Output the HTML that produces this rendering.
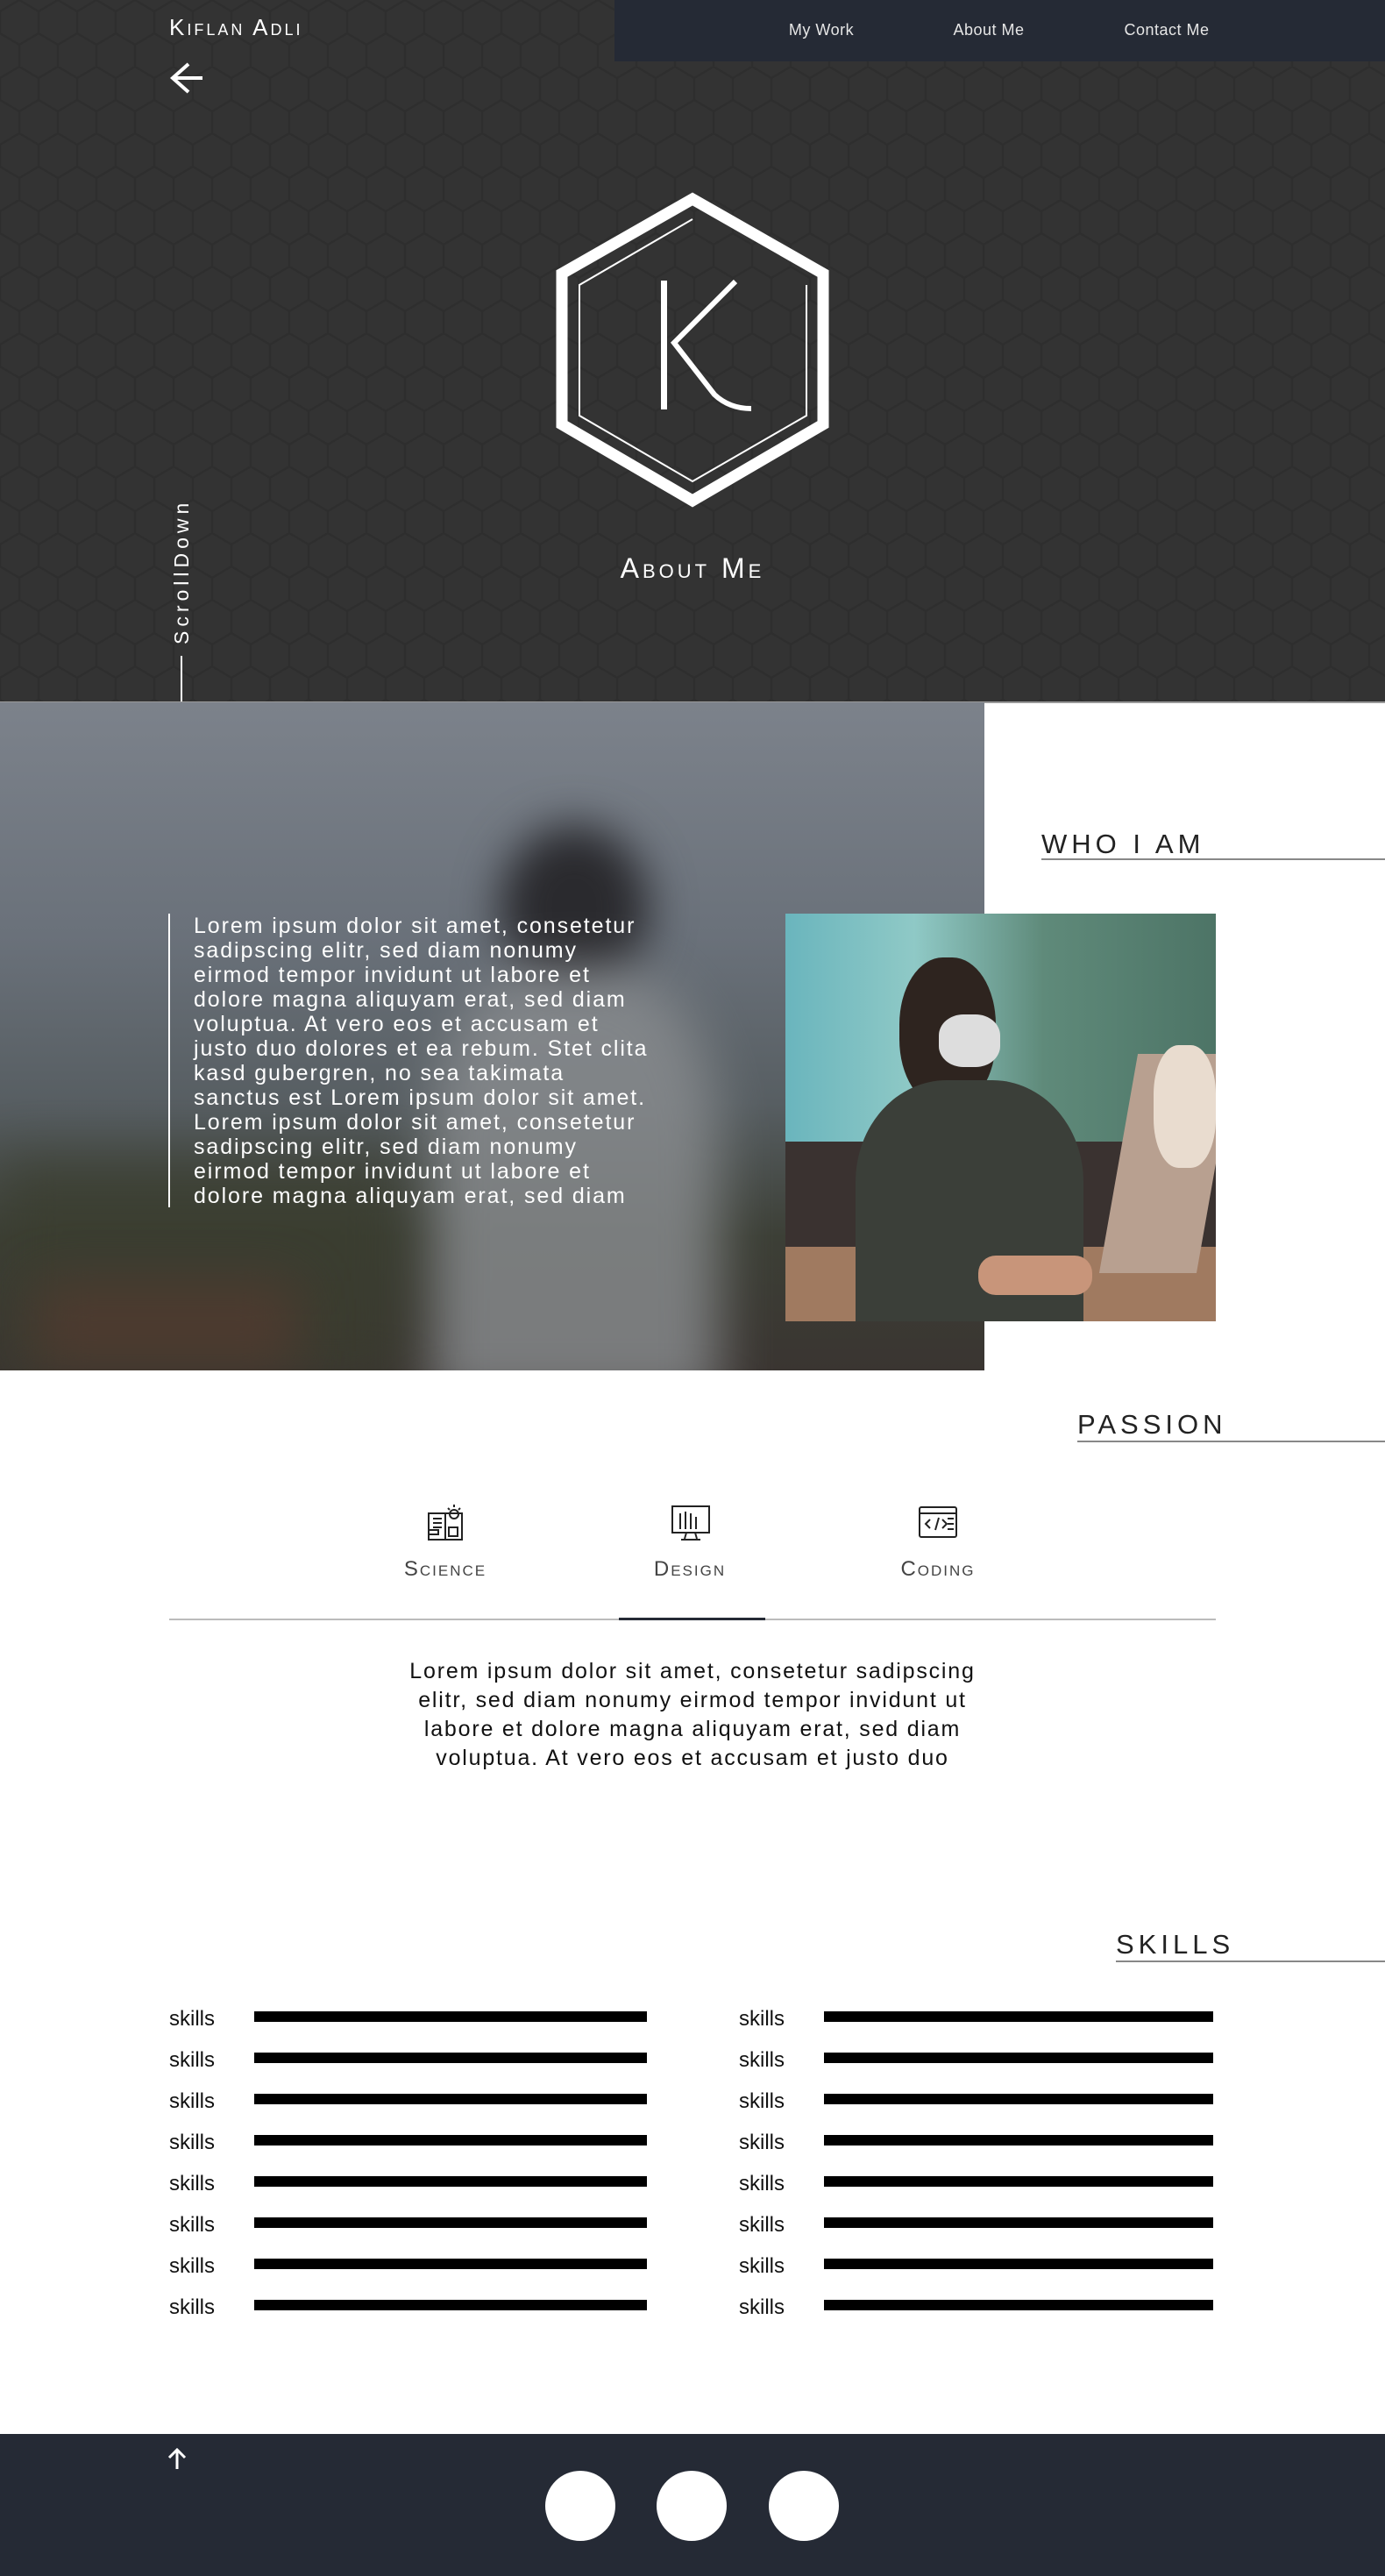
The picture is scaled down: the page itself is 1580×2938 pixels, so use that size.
<!DOCTYPE html>
<html><head><meta charset="utf-8">
<style>
*{margin:0;padding:0;box-sizing:border-box}
body{width:1580px;height:2938px;position:relative;background:#fff;font-family:"Liberation Sans",sans-serif;overflow:hidden}
.abs{position:absolute}
.hero{left:0;top:0;width:1580px;height:800px;background:#333}
.nav{left:701px;top:0;width:879px;height:70px;background:#252a35}
.nav span{position:absolute;top:24px;color:#e6e6e6;font-size:18px;transform:translateX(-50%);white-space:nowrap;letter-spacing:0.5px}
.logo{left:193px;top:16px;color:#fff;font-size:26px;letter-spacing:3px;font-variant:small-caps}
.title{color:#fff;font-size:32px;letter-spacing:4px;font-variant:small-caps;width:1580px;text-align:center;left:0;top:630px}
.head{font-size:31px;letter-spacing:5px;color:#222;font-weight:normal}
.hline{height:2px;background:#888}
.skill{font-size:24px;color:#111}
.lab{font-size:24px;color:#444;letter-spacing:2px;font-variant:small-caps;transform:translateX(-50%)}
.lt{white-space:nowrap}
</style></head><body>
<div class="abs hero">
<svg width="1580" height="800" style="position:absolute;left:0;top:0">
<defs><pattern id="hx" width="44" height="76" patternUnits="userSpaceOnUse">
<path d="M0,13 L22,0 L44,13 M0,13 L0,38 L22,51 L44,38 L44,13 M22,51 L22,76" fill="none" stroke="#2e2e2e" stroke-width="2.5"/>
</pattern></defs>
<rect width="1580" height="800" fill="url(#hx)"/>
<polygon points="790,227 939,312 939,484 790,571 641,484 641,312" fill="none" stroke="#fff" stroke-width="13"/>
<polyline points="920,325 920,474 790,549 661,474 661,325 790,250" fill="none" stroke="#fff" stroke-width="2"/>
<rect x="754" y="320" width="7" height="147" fill="#fff"/>
<path d="M839,321 L769,391 L815,450 Q832,466 857,466" fill="none" stroke="#fff" stroke-width="6"/>
<path d="M215,73 L197,89 L215,105 M197,89 L231,89" fill="none" stroke="#fff" stroke-width="4"/>
<rect x="206" y="748" width="2" height="52" fill="#fff"/>
</svg>
</div>
<div class="abs nav"><span style="left:236px">My Work</span><span style="left:427px">About Me</span><span style="left:630px">Contact Me</span></div>
<div class="abs logo">Kiflan Adli</div>
<div class="abs" style="left:194px;top:735px;transform:rotate(-90deg);transform-origin:0 0;color:#fff;font-size:23px;letter-spacing:5px;white-space:nowrap">ScrollDown</div>
<div class="abs title">About Me</div>
<div class="abs" style="left:0;top:800px;width:1580px;height:2px;background:#999"></div>

<div class="abs" style="left:0;top:801px;width:1123px;height:762px;overflow:hidden;background:linear-gradient(#7c828b 0%,#6a717a 35%,#575e62 60%,#3c3f36 80%,#3a3531 100%)">
<div class="abs" style="left:570px;top:140px;width:170px;height:190px;border-radius:50%;background:#2a2a2e;filter:blur(25px)"></div>
<div class="abs" style="left:490px;top:300px;width:330px;height:500px;border-radius:40% 40% 0 0;background:#8a8d90;filter:blur(30px);opacity:.8"></div>
<div class="abs" style="left:0;top:520px;width:460px;height:250px;background:#3a3d2e;filter:blur(30px);opacity:.7"></div>
<div class="abs" style="left:40px;top:660px;width:300px;height:100px;background:#5a3a30;filter:blur(30px);opacity:.6"></div>
</div>
<div class="abs" style="left:192px;top:1042px;width:2px;height:335px;background:#fff"></div>
<div class="abs lt" style="left:221px;top:1042px;color:#fff;font-size:25px;letter-spacing:1.9px;line-height:28px">Lorem ipsum dolor sit amet, consetetur<br>sadipscing elitr, sed diam nonumy<br>eirmod tempor invidunt ut labore et<br>dolore magna aliquyam erat, sed diam<br>voluptua. At vero eos et accusam et<br>justo duo dolores et ea rebum. Stet clita<br>kasd gubergren, no sea takimata<br>sanctus est Lorem ipsum dolor sit amet.<br>Lorem ipsum dolor sit amet, consetetur<br>sadipscing elitr, sed diam nonumy<br>eirmod tempor invidunt ut labore et<br>dolore magna aliquyam erat, sed diam</div>

<div class="abs" style="left:896px;top:1042px;width:491px;height:465px;overflow:hidden;background:linear-gradient(90deg,#6ab5bd 0%,#8fc9c6 30%,#5f8a7a 60%,#4d7466 100%)">
<div class="abs" style="left:0;top:260px;width:491px;height:205px;background:#3a3230"></div>
<div class="abs" style="left:0;top:380px;width:491px;height:90px;background:#a07a60"></div>
<div class="abs" style="left:130px;top:50px;width:110px;height:170px;border-radius:45%;background:#2e241f"></div>
<div class="abs" style="left:175px;top:115px;width:70px;height:60px;border-radius:40%;background:#ddd"></div>
<div class="abs" style="left:80px;top:190px;width:260px;height:290px;border-radius:40% 40% 0 0;background:#3b3f39"></div>
<div class="abs" style="left:220px;top:390px;width:130px;height:45px;border-radius:20px;background:#c8957a"></div>
<div class="abs" style="left:380px;top:160px;width:111px;height:250px;background:#b8a090;transform:skewX(-10deg)"></div>
<div class="abs" style="left:420px;top:150px;width:71px;height:140px;border-radius:40%;background:#e9dccf"></div>
</div>

<div class="abs head" style="left:1188px;top:945px">WHO I AM</div>
<div class="abs hline" style="left:1188px;top:979px;width:392px"></div>

<div class="abs head" style="left:1229px;top:1607px">PASSION</div>
<div class="abs hline" style="left:1229px;top:1643px;width:351px"></div>

<svg class="abs" style="left:486px;top:1715px" width="46" height="46" viewBox="0 0 46 46" fill="none" stroke="#222" stroke-width="2"><rect x="3" y="11" width="38" height="30"/><path d="M22 11v30M8 17h10M8 22h10M8 27h10M26 27h10v10H26zM4 30h10v5H4"/><circle cx="32" cy="12" r="5"/><path d="M32 1v3M25 5l2 2M39 5l-2 2"/></svg>
<svg class="abs" style="left:765px;top:1716px" width="46" height="44" viewBox="0 0 46 44" fill="none" stroke="#222" stroke-width="2"><rect x="2" y="2" width="42" height="30"/><path d="M18 32l-2 7M28 32l2 7M12 40h22M11 10v18M17 8v20M23 10v18M29 14v14"/></svg>
<svg class="abs" style="left:1047px;top:1717px" width="46" height="40" viewBox="0 0 46 40" fill="none" stroke="#222" stroke-width="2"><rect x="2" y="2" width="42" height="34" rx="2"/><path d="M2 9h42M14 16l-5 5 5 5M24 14l-4 14M28 16l5 5-5 5M34 15h7M34 21h7M34 27h7"/></svg>
<div class="abs lab" style="left:508px;top:1776px">Science</div>
<div class="abs lab" style="left:787px;top:1776px">Design</div>
<div class="abs lab" style="left:1070px;top:1776px">Coding</div>
<div class="abs" style="left:193px;top:1846px;width:1194px;height:2px;background:#bbb"></div>
<div class="abs" style="left:706px;top:1845px;width:167px;height:3px;background:#252a35"></div>
<div class="abs lt" style="left:0;top:1890px;width:1580px;text-align:center;font-size:25px;letter-spacing:1.8px;line-height:33px;color:#111">Lorem ipsum dolor sit amet, consetetur sadipscing<br>elitr, sed diam nonumy eirmod tempor invidunt ut<br>labore et dolore magna aliquyam erat, sed diam<br>voluptua. At vero eos et accusam et justo duo</div>

<div class="abs head" style="left:1273px;top:2200px">SKILLS</div>
<div class="abs hline" style="left:1273px;top:2236px;width:307px"></div>

<div class="abs skill" style="left:193px;top:2279px;line-height:47px">skills<br>skills<br>skills<br>skills<br>skills<br>skills<br>skills<br>skills</div>
<div class="abs skill" style="left:843px;top:2279px;line-height:47px">skills<br>skills<br>skills<br>skills<br>skills<br>skills<br>skills<br>skills</div>
<div class="abs" style="left:290px;top:2294px;width:448px;height:370px;background:repeating-linear-gradient(#000 0 12px,transparent 12px 47px)"></div>
<div class="abs" style="left:940px;top:2294px;width:444px;height:370px;background:repeating-linear-gradient(#000 0 12px,transparent 12px 47px)"></div>

<div class="abs" style="left:0;top:2776px;width:1580px;height:162px;background:#252a35"></div>
<svg class="abs" style="left:190px;top:2790px" width="24" height="28"><path d="M12 26V4M3 13l9-9 9 9" fill="none" stroke="#fff" stroke-width="3"/></svg>
<div class="abs" style="left:622px;top:2818px;width:80px;height:80px;border-radius:50%;background:#fff"></div>
<div class="abs" style="left:749px;top:2818px;width:80px;height:80px;border-radius:50%;background:#fff"></div>
<div class="abs" style="left:877px;top:2818px;width:80px;height:80px;border-radius:50%;background:#fff"></div>
</body></html>
